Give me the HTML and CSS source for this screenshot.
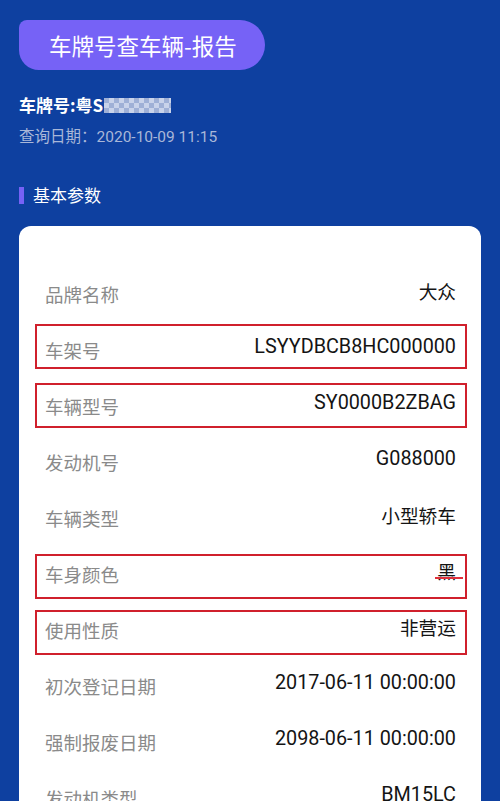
FILE: index.html
```html
<!DOCTYPE html>
<html lang="zh-CN">

<head>
    <meta charset="UTF-8">
    <meta name="viewport" content="width=device-width, initial-scale=1.0">
    <title>车牌号查车辆-报告</title>
    <link rel="stylesheet" href="styles.css">
</head>

<body>
    <div class="page">
        <div class="title-btn">车牌号查车辆-报告</div>

        <div class="plate">车牌号:粤S<span class="mosaic"></span></div>
        <div class="date">查询日期：<span class="num">2020-10-09 11:15</span></div>

        <div class="section">基本参数</div>

        <div class="card">
            <div class="row">
                <span class="label">品牌名称</span>
                <span class="value cn">大众</span>
            </div>
            <div class="row mark mark-a">
                <span class="label">车架号</span>
                <span class="value">LSYYDBCB8HC000000</span>
            </div>
            <div class="row mark mark-b">
                <span class="label">车辆型号</span>
                <span class="value">SY0000B2ZBAG</span>
            </div>
            <div class="row">
                <span class="label">发动机号</span>
                <span class="value">G088000</span>
            </div>
            <div class="row">
                <span class="label">车辆类型</span>
                <span class="value cn">小型轿车</span>
            </div>
            <div class="row mark mark-c">
                <span class="label">车身颜色</span>
                <span class="value cn smudge">黑</span>
            </div>
            <div class="row mark mark-c">
                <span class="label">使用性质</span>
                <span class="value cn">非营运</span>
            </div>
            <div class="row">
                <span class="label">初次登记日期</span>
                <span class="value">2017-06-11 00:00:00</span>
            </div>
            <div class="row">
                <span class="label">强制报废日期</span>
                <span class="value">2098-06-11 00:00:00</span>
            </div>
            <div class="row">
                <span class="label">发动机类型</span>
                <span class="value">BM15LC</span>
            </div>
        </div>
    </div>
</body>

</html>
```

FILE: styles.css
```css
* {
    box-sizing: border-box;
}

body {
    margin: 0;
    height: 801px;
    overflow: hidden;
    background-color: #0e40a0;
    font-family: Roboto, "Noto Sans CJK SC", sans-serif;
    color: #fff;
}

.page {
    padding: 20px 19px 0;
}

.title-btn {
    display: inline-block;
    height: 50px;
    line-height: 50px;
    padding: 0 28px 0 30px;
    background-color: #7662f6;
    border-radius: 8px 25px 25px 20px;
    font-family: "Noto Sans CJK SC", sans-serif;
    font-size: 22.5px;
}

.plate {
    margin-top: 23px;
    height: 24px;
    line-height: 24px;
    display: flex;
    align-items: center;
    font-family: "Noto Sans CJK SC", sans-serif;
    font-size: 17px;
    font-weight: 700;
}

.mosaic {
    display: inline-block;
    width: 67px;
    height: 15px;
    margin-left: 1px;
    background: repeating-conic-gradient(#c9d3ea 0 25%, #9fb0d6 0 50%) 0 0 / 10px 10px;
}

.date {
    margin-top: 8px;
    height: 20px;
    line-height: 20px;
    font-family: "Noto Sans CJK SC", sans-serif;
    font-size: 15.5px;
    color: #a9b7d8;
}

.date .num {
    font-family: Roboto, sans-serif;
}

.section {
    margin-top: 40px;
    height: 20px;
    line-height: 20px;
    display: flex;
    align-items: center;
    font-family: "Noto Sans CJK SC", sans-serif;
    font-size: 17px;
}

.section::before {
    content: "";
    width: 5px;
    height: 17px;
    margin-right: 9px;
    background-color: #7662f6;
}

.card {
    margin-top: 21px;
    background-color: #fff;
    border-radius: 12px 12px 0 0;
    padding: 40px 0 0;
}

.row {
    position: relative;
    height: 56px;
    display: flex;
    justify-content: space-between;
    align-items: center;
    padding: 0 25px 0 26px;
}

.label {
    font-family: "Noto Sans CJK SC", sans-serif;
    font-size: 18.5px;
    color: #8a8a8a;
}

.value {
    margin-bottom: 8px;
    font-family: Roboto, "Noto Sans CJK SC", sans-serif;
    font-size: 19.8px;
    color: #141414;
}

.value.cn {
    font-family: "Noto Sans CJK SC", sans-serif;
    font-size: 18.7px;
}

.mark::after {
    content: "";
    position: absolute;
    left: 16px;
    right: 14px;
    top: 5px;
    height: 41px;
    border: 2px solid #d0202c;
}

.mark-a::after {
    top: 2px;
}

.mark-c::after {
    top: 8px;
}

.smudge {
    position: relative;
}

.smudge::after {
    content: "";
    position: absolute;
    left: -2px;
    right: -7px;
    top: 20px;
    height: 2px;
    background-color: #e0303c;
}
```
